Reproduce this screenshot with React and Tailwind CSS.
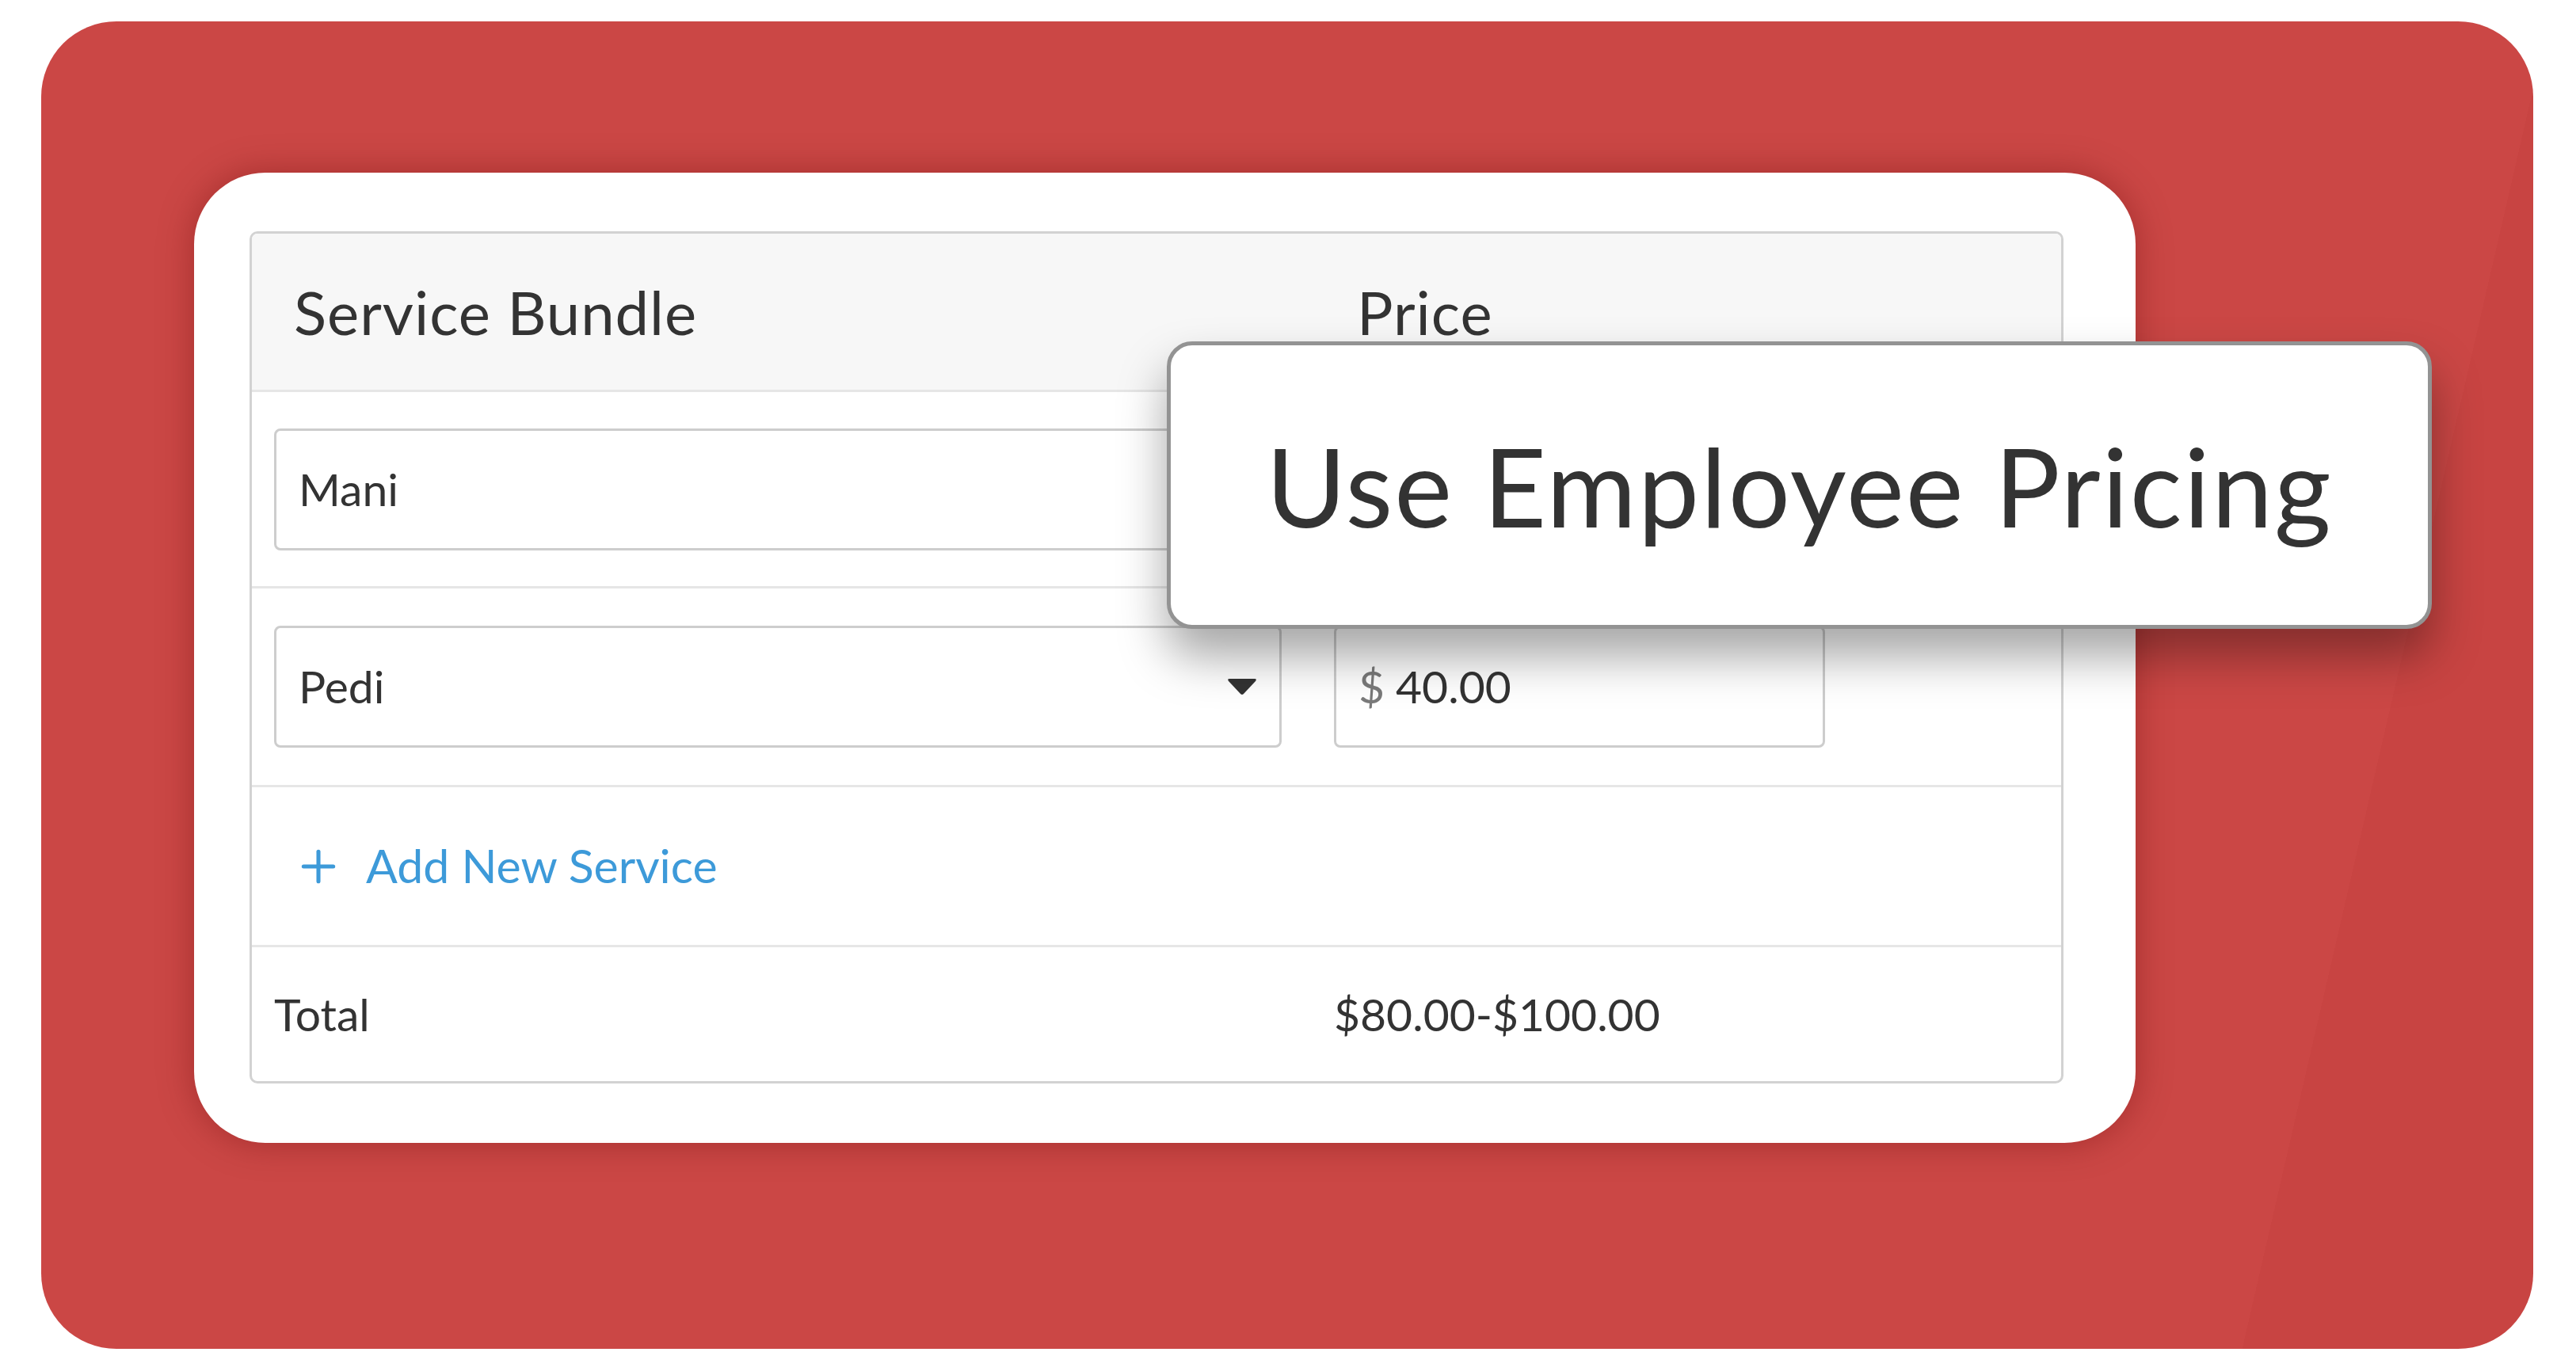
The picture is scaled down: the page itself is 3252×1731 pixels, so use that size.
import { Plus } from "lucide-react";

function Field({ children, className = "" }) {
  return (
    <div
      className={`h-[154px] border-[3px] border-[#cdcdcd] rounded-[8px] bg-white flex items-center px-[28px] text-[57px] text-[#333333] ${className}`}
    >
      {children}
    </div>
  );
}

function PriceField({ value }) {
  return (
    <Field className="w-[620px] shrink-0">
      {value && (
        <>
          <span className="text-[#7a7a7a] mr-[14px]">$</span>
          <span>{value}</span>
        </>
      )}
    </Field>
  );
}

function Caret() {
  return (
    <svg width="38" height="24" viewBox="0 0 38 24" className="shrink-0">
      <path
        d="M3 2 H35 Q38 2 36 5 L21 21 Q19 23 17 21 L2 5 Q0 2 3 2 Z"
        fill="#333333"
      />
    </svg>
  );
}

export default function App() {
  return (
    <div className="w-[3252px] h-[1731px] bg-white pt-[27px] pl-[52px] font-['Lato',sans-serif] text-[#333333]">
      <div className="w-[3146px] h-[1676px] rounded-[95px] bg-[linear-gradient(103deg,#cb4745_89.6%,#c84442_89.6%)] pt-[191px] pl-[193px]">
        <div className="relative w-[2451px] h-[1225px] bg-white rounded-[90px] pt-[74px] pl-[70px] shadow-[0_0_45px_rgba(90,0,0,0.35)]">
          {/* table */}
          <div className="w-[2290px] border-[3px] border-[#d2d2d2] rounded-[10px] overflow-hidden">
            <div className="h-[197px] bg-[#f7f7f7] flex items-center text-[76px] tracking-[1px]">
              <div className="w-[1395px] pl-[53px]">Service Bundle</div>
              <div>Price</div>
            </div>

            <div className="h-[248px] border-t-[3px] border-[#e6e6e6] flex items-center px-[28px] gap-[66px]">
              <Field className="w-[1272px] shrink-0">Mani</Field>
              <PriceField />
            </div>

            <div className="h-[251px] border-t-[3px] border-[#e6e6e6] flex items-center px-[28px] gap-[66px]">
              <Field className="w-[1272px] shrink-0 justify-between pr-[28px]">
                <span>Pedi</span>
                <Caret />
              </Field>
              <PriceField value="40.00" />
            </div>

            <div className="h-[202px] border-t-[3px] border-[#e6e6e6] flex items-center pl-[52px] text-[#3d9ad9]">
              <Plus size={64} strokeWidth={1.9} className="shrink-0" />
              <span className="ml-[28px] text-[59px]">Add New Service</span>
            </div>

            <div className="h-[172px] border-t-[3px] border-[#e6e6e6] flex items-center px-[28px] text-[57px]">
              <div className="w-[1338px]">Total</div>
              <div>$80.00-$100.00</div>
            </div>
          </div>

          {/* overlay callout */}
          <div className="absolute left-[1228px] top-[213px] w-[1597px] h-[363px] bg-white border-[5px] border-[#939393] rounded-[32px] shadow-[0_35px_60px_rgba(0,0,0,0.35)] flex items-center justify-center">
            <span className="text-[138px] tracking-[2px] leading-none">Use Employee Pricing</span>
          </div>
        </div>
      </div>
    </div>
  );
}
